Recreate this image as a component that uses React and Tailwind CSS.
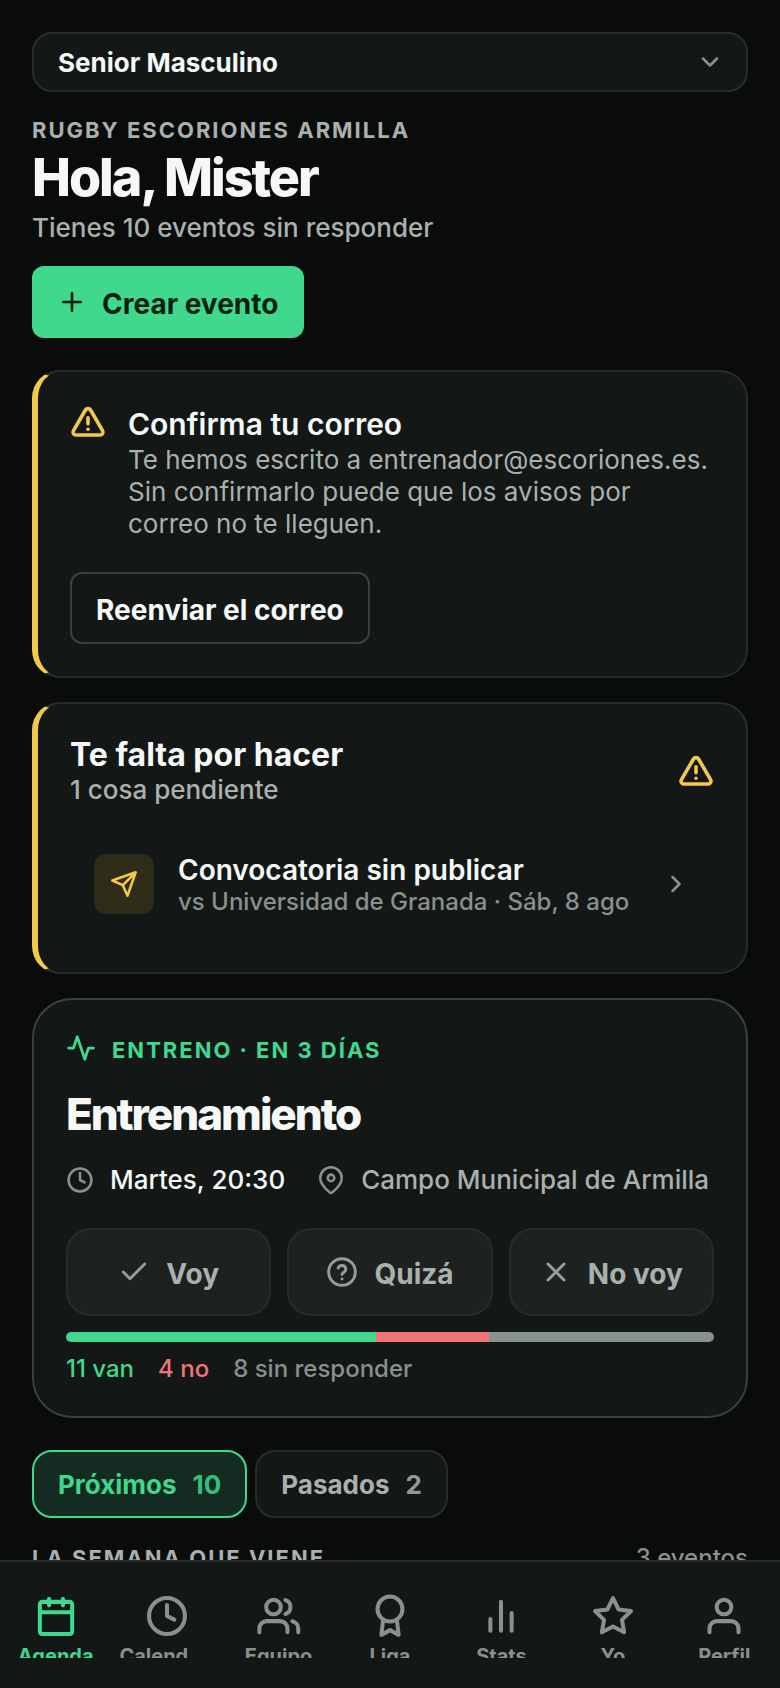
import { useState } from "react";
import clsx from "clsx";

// Shared outline icon, 24x24 grid
function Icon({ size = 28, className, children }) {
  return (
    <svg
      width={size}
      height={size}
      viewBox="0 0 24 24"
      fill="none"
      stroke="currentColor"
      strokeWidth={2.2}
      strokeLinecap="round"
      strokeLinejoin="round"
      aria-hidden="true"
      className={clsx("shrink-0 overflow-visible", className)}
    >
      {children}
    </svg>
  );
}

const icons = {
  warning: (
    <>
      <path d="M10.3 4 2.3 17.7A2 2 0 0 0 4 20.700h16a2 2 0 0 0 1.700-3L13.700 4a2 2 0 0 0-3.400 0z" strokeWidth="2.400" />
      <path d="M12 9.200v4M12 16.800h.01" strokeWidth="2.400" />
    </>
  ),
  clock: (
    <>
      <circle cx="12" cy="12" r="9.800" />
      <path d="M12 6v6l4 2" />
    </>
  ),
  pin: (
    <>
      <path d="M21.200 10.200c0 6-6.400 11-8.300 12.600a1.400 1.400 0 0 1-1.800 0C9.200 21.200 2.800 16.200 2.800 10.200a9.200 9.200 0 0 1 18.400 0z" />
      <circle cx="12" cy="10.200" r="2.800" />
    </>
  ),
  help: (
    <>
      <circle cx="12" cy="12" r="10" />
      <path d="M9.100 9a3 3 0 0 1 5.800 1c0 2-2.900 2.500-2.900 3.800M12 17.200h.01" />
    </>
  ),
  calendar: (
    <>
      <rect x="3.200" y="4.300" width="17.600" height="17.500" rx="1.300" />
      <path d="M3.200 10h17.600M8.200 2.600v3.600M15.800 2.600v3.600" />
    </>
  ),
  users: (
    <>
      <circle cx="9" cy="7.100" r="4" />
      <path d="M1.300 20.800v-2a4 4 0 0 1 4-4h7.300a4 4 0 0 1 4 4v2M15.500 3.300a4 4 0 0 1 0 7.600M19.300 14.900a4 4 0 0 1 3.200 3.900v2" />
    </>
  ),
  award: (
    <>
      <circle cx="12" cy="8.200" r="6.800" />
      <path d="M8.200 14.400 7.300 22.300l4.700-2.600 4.700 2.600-.9-7.900" />
    </>
  ),
  stats: <path d="M6.200 20v-6.300M12 20V4.300M17.800 20v-9.600" />,
  star: (
    <path d="m12 2.200 3 6.200 6.800.9-4.900 4.800 1.200 6.800-6.100-3.200-6.100 3.200 1.200-6.800-4.900-4.800 6.800-.9z" />
  ),
  user: (
    <>
      <circle cx="12" cy="7.100" r="4" />
      <path d="M4.100 20.800v-2a4 4 0 0 1 4-4h7.800a4 4 0 0 1 4 4v2" />
    </>
  ),
};

const NAV = [
  { label: "Agenda", icon: icons.calendar },
  { label: "Calendario", icon: icons.clock },
  { label: "Equipo", icon: icons.users },
  { label: "Liga", icon: icons.award },
  { label: "Stats", icon: icons.stats },
  { label: "Yo", icon: icons.star },
  { label: "Perfil", icon: icons.user },
];

const ANSWERS = [
  { label: "Voy", icon: <path d="M20 6 9 17l-5-5" /> },
  { label: "Quizá", icon: icons.help },
  { label: "No voy", icon: <path d="M18 6 6 18M6 6l12 12" /> },
];

const ATTENDANCE = [
  { count: 11, text: "van", bar: "bg-[#3fd88d]", color: "text-[#3fd88d]" },
  { count: 4, text: "no", bar: "bg-[#f27474]", color: "text-[#f27474]" },
  { count: 8, text: "sin responder", bar: "bg-[#87918d]", color: "text-[#87918d]" },
];

const TABS = [
  { label: "Próximos", count: 10 },
  { label: "Pasados", count: 2 },
];

function AlertCard({ children }) {
  return (
    <section className="rounded-[28px] border-2 border-l-6 border-[#262c2a] border-l-[#f2c94c] bg-[#131817] p-8">
      {children}
    </section>
  );
}

export default function App() {
  const [tab, setTab] = useState("Próximos");
  const [answer, setAnswer] = useState(null);
  const total = ATTENDANCE.reduce((sum, a) => sum + a.count, 0);

  return (
    <div className="h-screen flex flex-col overflow-hidden bg-[#090c0b] font-['Inter',sans-serif] text-[#f5f8f6]">
      <main className="flex-1 min-h-0 overflow-hidden px-8 pt-8">
        {/* Team picker */}
        <div className="relative">
          <select
            aria-label="Equipo"
            className="block w-full h-15 appearance-none rounded-[20px] border-2 border-[#262c2a] bg-[#131817] px-6 text-[26px] font-bold"
          >
            <option>Senior Masculino</option>
          </select>
          <Icon className="absolute right-6 top-4 text-[#87918d]">
            <path d="m6 9 6 6 6-6" />
          </Icon>
        </div>

        <header className="mt-6">
          <p className="text-[22px] leading-7 font-bold tracking-[2px] text-[#a9b1ae] uppercase">
            Rugby Escoriones Armilla
          </p>
          <h1 className="mt-1 text-[52px] leading-[60px] font-extrabold tracking-[-2px]">Hola, Mister</h1>
          <p className="mt-1 text-[26px] leading-8 font-medium text-[#a9b1ae]">Tienes 10 eventos sin responder</p>
          <button className="mt-[22px] flex h-18 items-center gap-4 rounded-xl bg-[#3fd88d] px-[26px] text-[28px] font-bold text-[#04210f]">
            <Icon>
              <path d="M12 4.500v15M4.500 12h15" />
            </Icon>
            <span className="pt-1">Crear evento</span>
          </button>
        </header>

        <div className="mt-8 flex flex-col gap-6">
          <AlertCard>
            <div className="flex gap-[22px]">
              <Icon size={36} className="text-[#f2c94c]">
                {icons.warning}
              </Icon>
              <div>
                <h2 className="text-[30px] leading-10 font-semibold">Confirma tu correo</h2>
                <p className="text-[26px] leading-8 text-[#a9b1ae]">
                  Te hemos escrito a entrenador@escoriones.es. Sin confirmarlo puede que los avisos por correo no te
                  lleguen.
                </p>
              </div>
            </div>
            <button className="mt-8 h-18 rounded-xl border-2 border-[#39403d] px-6 text-[28px] font-bold">
              <span className="block pt-1">Reenviar el correo</span>
            </button>
          </AlertCard>

          <AlertCard>
            <div className="flex items-center justify-between">
              <div>
                <h2 className="text-[32px] leading-[38px] font-bold">Te falta por hacer</h2>
                <p className="text-[26px] leading-8 font-medium text-[#a9b1ae]">1 cosa pendiente</p>
              </div>
              <Icon size={36} className="text-[#f2c94c]">
                {icons.warning}
              </Icon>
            </div>
            <a href="#convocatoria" className="mt-[22px] flex h-28 items-center gap-6 px-6">
              <span className="flex size-15 items-center justify-center rounded-xl bg-[#302c1a] text-[#f2c94c]">
                <Icon>
                  <path d="M22 2 11 13M22 2l-7 20-4-9-9-4z" />
                </Icon>
              </span>
              <span className="flex-1 pt-1">
                <span className="block text-[28px] leading-8 font-semibold">Convocatoria sin publicar</span>
                <span className="block text-2xl leading-8 font-medium text-[#87918d]">
                  vs Universidad de Granada · Sáb, 8 ago
                </span>
              </span>
              <Icon className="text-[#87918d]">
                <path d="m9 18 6-6-6-6" />
              </Icon>
            </a>
          </AlertCard>

          {/* Next event */}
          <section className="rounded-[40px] border-2 border-[#39403d] bg-[#131817] p-8">
            <p className="flex items-center gap-4 text-[22px] leading-7 font-bold tracking-[2px] text-[#3fd88d] uppercase">
              <Icon size={30}>
                <path d="M22 12h-4l-3 9L9 3l-3 9H2" />
              </Icon>
              <span className="pt-1">Entreno · en 3 días</span>
            </p>
            <h2 className="mt-6 text-[44px] leading-[52px] font-extrabold tracking-[-2px]">Entrenamiento</h2>
            <div className="mt-6 flex gap-8 text-[26px] leading-8 font-medium">
              <span className="flex items-center gap-4">
                <Icon className="text-[#87918d]">{icons.clock}</Icon>
                Martes, 20:30
              </span>
              <span className="flex items-center gap-4 text-[#a9b1ae]">
                <Icon className="text-[#87918d]">{icons.pin}</Icon>
                Campo Municipal de Armilla
              </span>
            </div>
            <div className="mt-8 grid grid-cols-3 gap-4">
              {ANSWERS.map((a) => (
                <button
                  key={a.label}
                  aria-pressed={answer === a.label}
                  onClick={() => setAnswer(a.label)}
                  className="flex h-22 items-center justify-center gap-4 rounded-3xl border-2 border-[#262c2a] bg-[#1d2221] text-[28px] font-bold text-[#a9b1ae]"
                >
                  <Icon size={32} className="text-[#959d9a]">
                    {a.icon}
                  </Icon>
                  <span className="pt-1">{a.label}</span>
                </button>
              ))}
            </div>
            <div className="mt-4 flex h-[10px] overflow-hidden rounded-full">
              {ATTENDANCE.map((a) => (
                <div key={a.text} className={a.bar} style={{ width: `${(a.count / total) * 100}%` }} />
              ))}
            </div>
            <div className="mt-3 flex gap-6 text-2xl leading-[30px] font-medium">
              {ATTENDANCE.map((a) => (
                <span key={a.text} className={a.color}>
                  {a.count} {a.text}
                </span>
              ))}
            </div>
          </section>
        </div>

        <div className="mt-8 flex gap-2">
          {TABS.map((t) => (
            <button
              key={t.label}
              onClick={() => setTab(t.label)}
              className={clsx(
                "flex h-17 items-center gap-4 rounded-[20px] border-2 px-6 text-[26px] font-bold",
                tab === t.label
                  ? "border-[#3fd88d] bg-[#142b21] text-[#3fd88d]"
                  : "border-[#262c2a] bg-[#131817] text-[#a9b1ae]"
              )}
            >
              <span>{t.label}</span>
              <span className="opacity-85">{t.count}</span>
            </button>
          ))}
        </div>

        <div className="mt-6 flex items-center justify-between">
          <h3 className="text-[22px] leading-8 font-bold tracking-[2px] text-[#a9b1ae] uppercase">
            La semana que viene
          </h3>
          <span className="text-2xl font-medium text-[#87918d]">3 eventos</span>
        </div>
      </main>

      {/* Bottom navigation */}
      <nav className="shrink-0 border-t-2 border-[#262c2a] bg-[#131817] pb-[30px]">
        <div className="flex h-24 overflow-hidden pt-8">
          {NAV.map((item, i) => (
            <a
              key={item.label}
              href={`#${item.label}`}
              className={clsx(
                "flex min-w-0 flex-1 flex-col items-center gap-1",
                i === 0 ? "text-[#3fd88d]" : "text-[#87918d]"
              )}
            >
              <Icon size={44}>{item.icon}</Icon>
              <span className="w-full shrink-0 truncate px-2 text-center text-xl font-bold">{item.label}</span>
            </a>
          ))}
        </div>
      </nav>
    </div>
  );
}
